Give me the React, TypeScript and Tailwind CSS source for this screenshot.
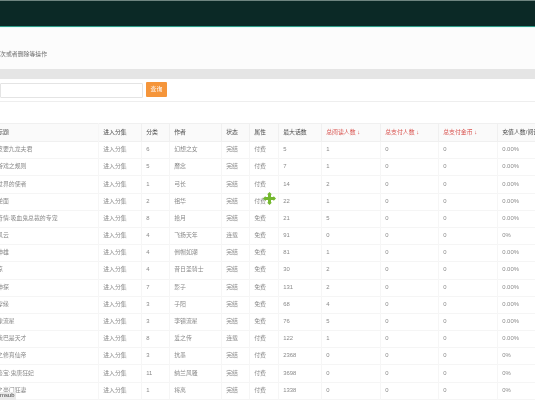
const rows = [
  ["皮要九龙夫君","6","幻想之女","完结","付费","5","1","0","0","0.00%"],
  ["游戏之规则","5","靡念","完结","付费","7","1","0","0","0.00%"],
  ["世界的使者","1","弓长","完结","付费","14","2","0","0","0.00%"],
  ["逆面","2","祖华","完结","付费","22","1","0","0","0.00%"],
  ["奇情:吸血鬼总裁的专宠","8","拾月","完结","免费","21","5","0","0","0.00%"],
  ["风云","4","飞扬天年","连载","免费","91","0","0","0","0%"],
  ["神雄","4","倒帽如潮","完结","免费","81","1","0","0","0.00%"],
  ["凉","4","昔日圣骑士","完结","免费","30","2","0","0","0.00%"],
  ["神探","7","影子","完结","免费","131","2","0","0","0.00%"],
  ["穿缘","3","子阳","完结","免费","68","4","0","0","0.00%"],
  ["像流星","3","李镇流星","完结","免费","76","5","0","0","0.00%"],
  ["我巴是天才","8","爱之传","连载","付费","122","1","0","0","0.00%"],
  ["之修真仙帝","3","抗墨","完结","付费","2368","0","0","0","0%"],
  ["鉴宝:鬼唐狂妃","11","纳兰风骚","完结","付费","3698","0","0","0","0%"],
  ["之豪门狂妻","1","将离","完结","付费","1338","0","0","0","0%"],
];

const head = "px-[4.7px] text-left font-normal border-r border-[#f0f0f0] last:border-r-0 whitespace-nowrap overflow-hidden";
const cell = "px-[4.7px] border-r border-[#f6f6f6] last:border-r-0 whitespace-nowrap overflow-hidden";
const first = "border-r border-[#f6f6f6] whitespace-nowrap overflow-hidden";

export default function App() {
  return (
    <div className="w-[535px] h-[400px] overflow-hidden relative bg-[#fdfdfd] text-[5.9px] leading-none text-[#8a8a8a] font-['Liberation_Sans','Noto_Sans_CJK_SC',sans-serif] blur-[0.4px]">
      <div className="h-[1px] bg-[#6f8580]" />
      <div className="h-[25px] bg-[#0b2926]" />
      <div className="h-[1px] bg-[#2f9c88]" />
      <div className="h-[1px] bg-[#e6fbf8]" />
      <div className="h-[41px] bg-[#fcfcfc] flex items-start pt-[24px] whitespace-nowrap text-[#707070]">
        <span>次或者删除等操作</span>
      </div>
      <div className="h-[10px] bg-[#e5e5e5]" />
      <div className="h-[23px] bg-white border-b border-[#eeeeee] flex items-start pt-[4px] gap-[3px]">
        <div className="w-[143px] h-[15px] bg-white border border-[#e4e4e4] rounded-[1px]" />
        <div className="w-[21px] h-[15px] bg-[#f5953a] rounded-[1px] text-white flex items-center justify-center mt-[-1px]">查询</div>
      </div>
      <div className="h-[21px] bg-white" />
      <table className="table-fixed border-collapse w-[600px]">
        <colgroup>
          <col className="w-[98px]" />
          <col className="w-[43px]" />
          <col className="w-[28px]" />
          <col className="w-[52px]" />
          <col className="w-[28px]" />
          <col className="w-[29px]" />
          <col className="w-[43px]" />
          <col className="w-[59px]" />
          <col className="w-[58px]" />
          <col className="w-[59px]" />
          <col className="w-[103px]" />
        </colgroup>
        <thead>
          <tr className="h-[18px] bg-[#fafafa] border-t border-b border-[#f0f0f0] text-[#4a4a4a]">
            <th className={first + " text-left font-normal"}><span className="block ml-[-3px]">标题</span></th>
            <th className={head}>进入分集</th>
            <th className={head}>分类</th>
            <th className={head}>作者</th>
            <th className={head}>状态</th>
            <th className={head}>属性</th>
            <th className={head}>最大话数</th>
            <th className={head + " text-[#d9534f]"}>总阅读人数 ↓</th>
            <th className={head + " text-[#d9534f]"}>总支付人数 ↓</th>
            <th className={head + " text-[#d9534f]"}>总支付金币 ↓</th>
            <th className={head}>充值人数/阅读人数</th>
          </tr>
        </thead>
        <tbody>
          {rows.map((r, i) => (
            <tr key={i} className="h-[17.2px] border-b border-[#f5f5f5] bg-white">
              <td className={first}><span className="block ml-[-3px]">{r[0]}</span></td>
              <td className={cell}>进入分集</td>
              {r.slice(1).map((c, j) => (
                <td key={j} className={cell}>{c}</td>
              ))}
            </tr>
          ))}
        </tbody>
      </table>
      <div className="h-[4px] bg-[#eeeeee]" />
      <svg className="absolute left-[263px] top-[192px]" width="13" height="13" viewBox="0 0 13 13">
        <path d="M6.500 0 9 2.500H8V5H10.500V4L13 6.500 10.500 9V8H8V10.500H9L6.500 13 4 10.500H5V8H2.500V9L0 6.500 2.500 4V5H5V2.500H4Z" fill="#74b82f" />
      </svg>
      <div className="absolute left-0 bottom-0 w-[16px] h-[8px] bg-[#eaeaea] text-[#444444] flex items-center justify-start whitespace-nowrap">msub</div>
    </div>
  );
}
